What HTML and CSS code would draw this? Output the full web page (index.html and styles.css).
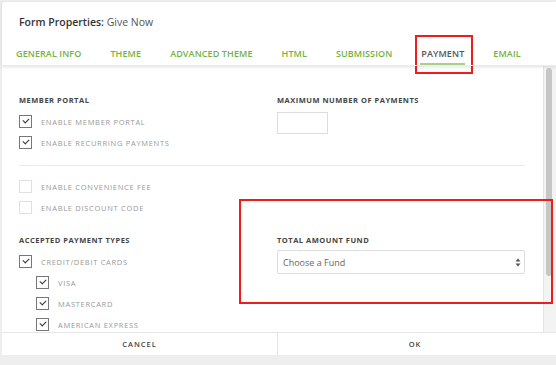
FILE: index.html
```html
<!DOCTYPE html>
<html lang="en">
<head>
    <meta charset="UTF-8">
    <title>Form Properties</title>
    <link rel="stylesheet" href="styles.css">
</head>
<body>

<div class="dialog">
    <div class="dialog-head">
        <h1 class="title"><b>Form Properties:</b> Give Now</h1>
        <nav class="tabs">
            <a href="#">General Info</a>
            <a href="#">Theme</a>
            <a href="#">Advanced Theme</a>
            <a href="#">HTML</a>
            <a href="#">Submission</a>
            <a href="#" class="active">Payment</a>
            <a href="#">Email</a>
        </nav>
    </div>

    <div class="dialog-body">
        <div class="content">
            <div class="row">
                <div class="col">
                    <h3>Member Portal</h3>
                    <label class="check on"><span class="box"></span>Enable Member Portal</label>
                    <label class="check on"><span class="box"></span>Enable Recurring Payments</label>
                </div>
                <div class="col">
                    <h3>Maximum Number of Payments</h3>
                    <input type="text" class="small-input">
                </div>
            </div>

            <hr>

            <div class="row">
                <div class="col">
                    <label class="check"><span class="box"></span>Enable Convenience Fee</label>
                    <label class="check"><span class="box"></span>Enable Discount Code</label>
                </div>
            </div>

            <div class="row row-types">
                <div class="col">
                    <h3>Accepted Payment Types</h3>
                    <label class="check on"><span class="box"></span>Credit/Debit Cards</label>
                    <div class="sub">
                        <label class="check on"><span class="box"></span>Visa</label>
                        <label class="check on"><span class="box"></span>Mastercard</label>
                        <label class="check on"><span class="box"></span>American Express</label>
                    </div>
                </div>
                <div class="col">
                    <h3 class="fund-title">Total Amount Fund</h3>
                    <div class="select">
                        <span>Choose a Fund</span>
                        <svg width="6" height="9" viewBox="0 0 6 9"><path d="M3 0.5 L5.5 3.5 H0.5 Z M3 8.5 L5.5 5.5 H0.5 Z" fill="#555"/></svg>
                    </div>
                </div>
            </div>
        </div>
        <div class="scrollbar"><div class="thumb"></div></div>
    </div>

    <div class="dialog-foot">
        <button>Cancel</button>
        <button>OK</button>
    </div>
</div>

<div class="mark mark-tab"></div>
<div class="mark mark-fund"></div>

</body>
</html>
```

FILE: styles.css
```css
body {
    margin: 0;
    background: #eeeeee;
    font-family: "Open Sans", Arial, sans-serif;
    width: 556px;
    height: 365px;
    overflow: hidden;
    position: relative;
}
.dialog {
    margin: 2px 0 0 2px;
    width: 554px;
    height: 353px;
    background: #fff;
    border-radius: 4px 0 0 4px;
    display: flex;
    flex-direction: column;
}
.dialog-head {
    height: 63px;
    flex: none;
    box-shadow: 0 1px 3px rgba(0,0,0,0.12);
    border-bottom: 1px solid #ececec;
    position: relative;
    z-index: 1;
}
.title {
    margin: 0;
    padding: 13px 0 0 17px;
    font-size: 10.5px;
    line-height: 14px;
    font-weight: 400;
    color: #555;
}
.title b {
    font-weight: 600;
    color: #333;
}
.tabs {
    display: flex;
    gap: 27px;
    padding: 18px 0 0 13px;
}
.tabs a {
    color: #72b33e;
    text-decoration: none;
    text-transform: uppercase;
    font-size: 9px;
    font-weight: 600;
    letter-spacing: 0.1px;
    line-height: 13px;
    padding: 0 1px 3px;
    border-bottom: 2px solid transparent;
    white-space: nowrap;
}
.tabs a.active {
    color: #555;
    border-bottom-color: #a8d08c;
}

.dialog-body {
    flex: 1;
    display: flex;
    min-height: 0;
}
.content {
    flex: 1;
    overflow: hidden;
    padding: 29px 0 0 17px;
}
.scrollbar {
    flex: none;
    width: 13px;
    background: #f3f3f3;
    border-left: 1px solid #e4e4e4;
    padding: 2px 0 0 2px;
    box-sizing: border-box;
}
.thumb {
    width: 6px;
    height: 208px;
    border-radius: 3px;
    background: #c6c6c6;
}
.row {
    display: grid;
    grid-template-columns: 258px 248px;
}
.row-types {
    margin-top: 13px;
}
.col h3 {
    margin: 0 0 10px;
    font-size: 7.5px;
    line-height: 10px;
    font-weight: 700;
    color: #444;
    letter-spacing: 0.5px;
    text-transform: uppercase;
}
.col h3.fund-title {
    margin-bottom: 5px;
}
.check {
    display: flex;
    align-items: center;
    height: 13px;
    margin-bottom: 8px;
    font-size: 7.5px;
    color: #999;
    letter-spacing: 0.7px;
    text-transform: uppercase;
}
.sub .check {
    margin-left: 17px;
}
.box {
    width: 11px;
    height: 11px;
    border: 1px solid #e0e0e0;
    margin-right: 9px;
    position: relative;
    flex: none;
}
.check.on .box {
    border-color: #777;
}
.check.on .box::after {
    content: "";
    position: absolute;
    left: 3px;
    top: 2px;
    width: 5px;
    height: 3px;
    border-left: 1px solid #333;
    border-bottom: 1px solid #333;
    transform: rotate(-45deg);
}
hr {
    width: 506px;
    border: 0;
    border-top: 1px solid #eaeaea;
    margin: 8px 0 14px 0;
}
.small-input {
    width: 51px;
    height: 22px;
    margin: -3px 0 0;
    border: 1px solid #ddd;
    box-sizing: border-box;
    display: block;
}
.select {
    width: 248px;
    height: 24px;
    box-sizing: border-box;
    border: 1px solid #ddd;
    border-radius: 2px;
    display: flex;
    align-items: center;
    justify-content: space-between;
    padding: 0 3px 0 5px;
    font-size: 9px;
    color: #666;
}

.dialog-foot {
    flex: none;
    display: grid;
    grid-template-columns: 275px 275px;
    border-top: 1px solid #e6e6e6;
    height: 22px;
}
.dialog-foot button {
    background: #fff;
    border: 0;
    font-family: inherit;
    font-size: 7.5px;
    font-weight: 600;
    letter-spacing: 1px;
    color: #444;
    text-transform: uppercase;
    padding: 0;
}
.dialog-foot button + button {
    border-left: 1px solid #e6e6e6;
}

.mark {
    position: absolute;
    border: 2px solid #ee1c1c;
    box-sizing: border-box;
}
.mark-tab {
    left: 415px;
    top: 35px;
    width: 58px;
    height: 39px;
}
.mark-fund {
    left: 239px;
    top: 199px;
    width: 314px;
    height: 105px;
}
```
